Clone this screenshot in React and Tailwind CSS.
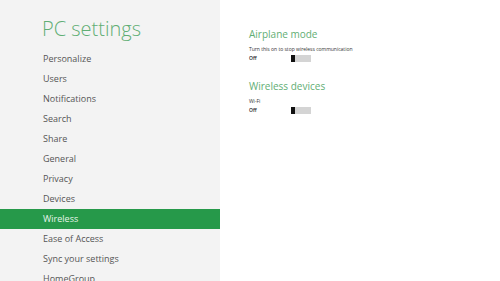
import React from 'react';

const menuItems = [
  'Personalize',
  'Users',
  'Notifications',
  'Search',
  'Share',
  'General',
  'Privacy',
  'Devices',
  'Wireless',
  'Ease of Access',
  'Sync your settings',
  'HomeGroup',
];

function Toggle() {
  return (
    <div className="flex h-[7px] w-[20px] items-stretch bg-[#d4d4d4]">
      <div className="w-[4px] bg-[#111]" />
    </div>
  );
}

function SettingBlock({ title, label }) {
  return (
    <div className="flex flex-col">
      <div className="text-[10px] leading-[12px] text-[#5fae74]">{title}</div>
      <div className="mt-[6px] text-[5px] leading-[7px] text-[#333]">{label}</div>
      <div className="mt-[2px] flex items-center">
        <span className="w-[42px] text-[5px] font-semibold leading-[7px] text-[#222]">Off</span>
        <Toggle />
      </div>
    </div>
  );
}

export default function App() {
  return (
    <div className="flex h-[281px] w-[500px] overflow-hidden bg-white font-['Open_Sans','Noto_Sans',sans-serif]">
      {/* left menu */}
      <div className="flex w-[220px] shrink-0 flex-col bg-[#f3f3f3]">
        <div className="pl-[42px] pt-[15px] text-[20px] font-light leading-[28px] text-[#5fae74]">PC settings</div>
        <div className="mt-[6px] flex flex-col">
          {menuItems.map((item) => (
            <div
              key={item}
              className={
                item === 'Wireless'
                  ? 'flex h-[20px] items-center bg-[#26994a] pl-[43px] text-[9px] text-[#e8f5ea]'
                  : 'flex h-[20px] items-center pl-[43px] text-[9px] text-[#555]'
              }
            >
              {item}
            </div>
          ))}
        </div>
      </div>

      {/* right content */}
      <div className="flex flex-1 flex-col gap-[18px] pl-[29px] pt-[28px]">
        <SettingBlock title="Airplane mode" label="Turn this on to stop wireless communication" />
        <SettingBlock title="Wireless devices" label="Wi-Fi" />
      </div>
    </div>
  );
}
